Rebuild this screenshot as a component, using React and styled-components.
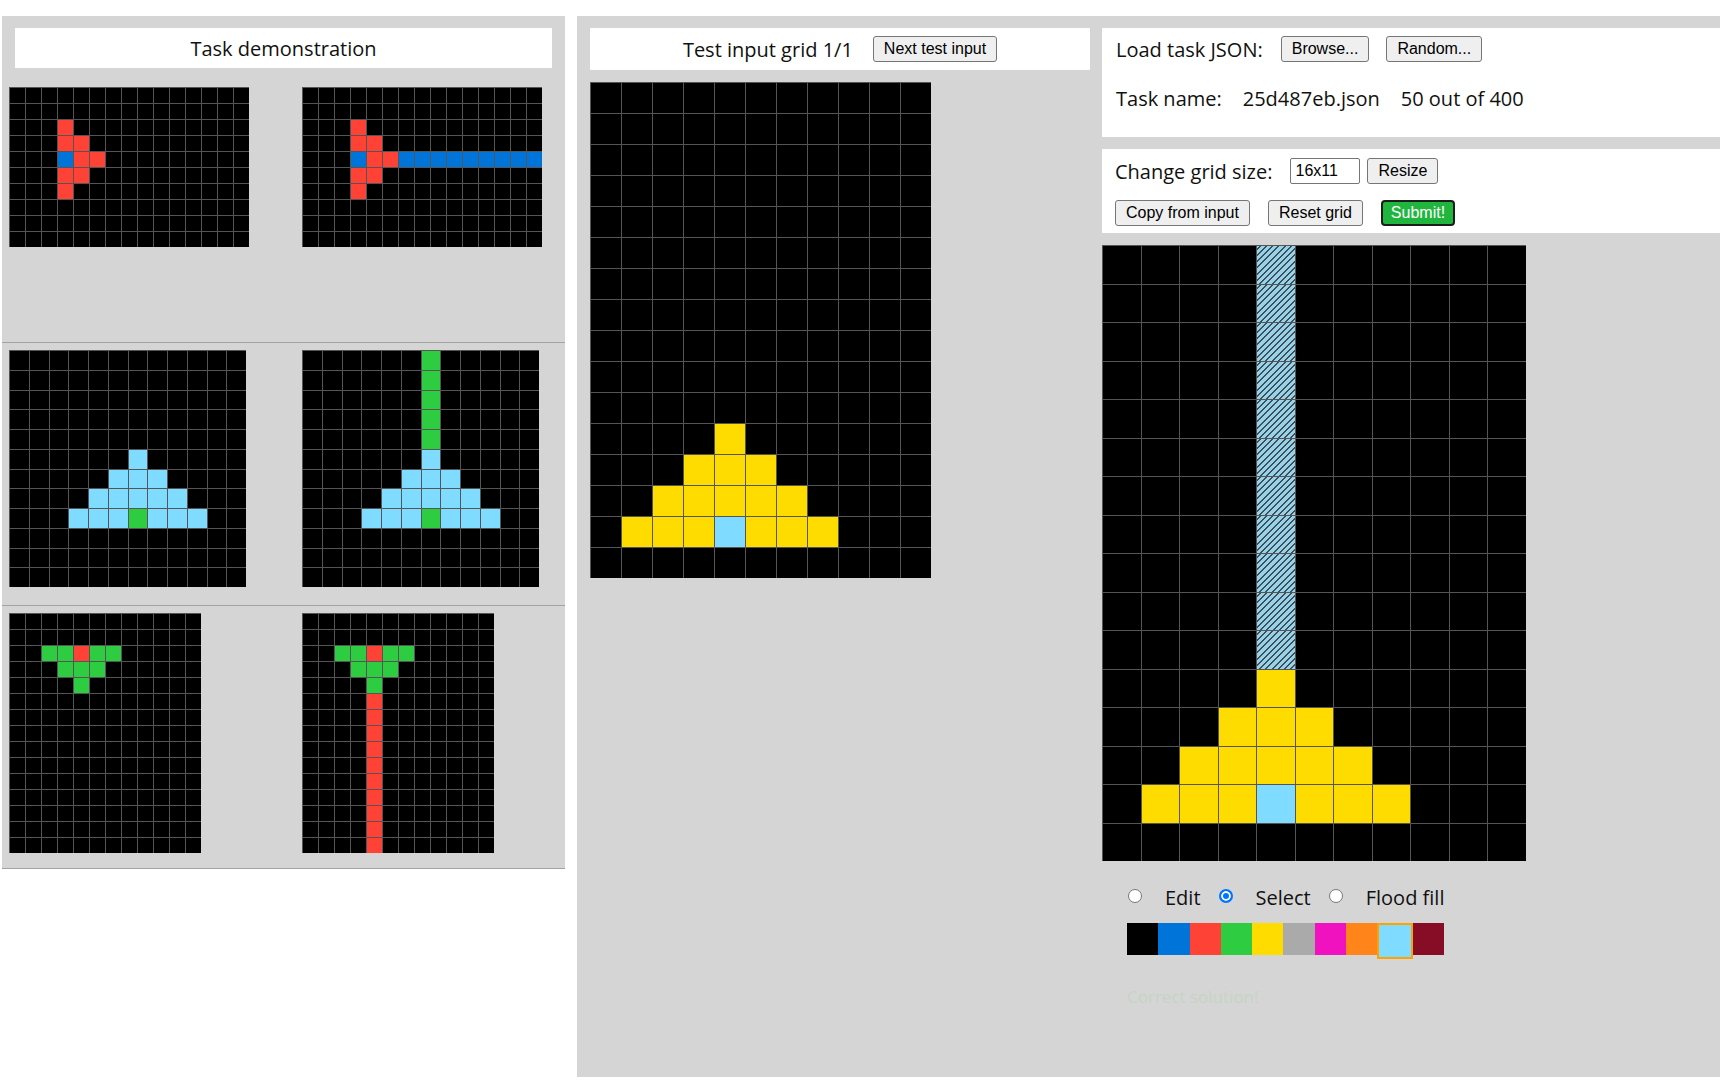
import React from 'react';
import styled, { createGlobalStyle, css } from 'styled-components';

const PALETTE = ['#000000', '#0074D9', '#FF4136', '#2ECC40', '#FFDC00', '#AAAAAA', '#F012BE', '#FF851B', '#7FDBFF', '#870C25'];

function makeGrid(rows, cols, marks) {
  const g = Array.from({ length: rows }, () => Array(cols).fill(0));
  marks.forEach(([r, c, v]) => { g[r][c] = v; });
  return g;
}
const range = (a, b) => Array.from({ length: b - a + 1 }, (_, i) => a + i);

const arrowShape = [[2, 3, 2], [3, 3, 2], [3, 4, 2], [4, 3, 1], [4, 4, 2], [4, 5, 2], [5, 3, 2], [5, 4, 2], [6, 3, 2]];
const triShape = [
  [5, 6, 8],
  ...range(5, 7).map((c) => [6, c, 8]),
  ...range(4, 8).map((c) => [7, c, 8]),
  ...range(3, 9).map((c) => [8, c, c === 6 ? 3 : 8]),
];
const tShape = [[2, 2, 3], [2, 3, 3], [2, 4, 2], [2, 5, 3], [2, 6, 3], [3, 3, 3], [3, 4, 3], [3, 5, 3], [4, 4, 3]];
const yellowTri = [
  [11, 4, 4],
  ...range(3, 5).map((c) => [12, c, 4]),
  ...range(2, 6).map((c) => [13, c, 4]),
  ...range(1, 7).map((c) => [14, c, c === 4 ? 8 : 4]),
];

const pairs = [
  { cell: 16, grids: [makeGrid(10, 15, arrowShape), makeGrid(10, 15, [...arrowShape, ...range(6, 14).map((c) => [4, c, 1])])] },
  { cell: 19.75, grids: [makeGrid(12, 12, triShape), makeGrid(12, 12, [...triShape, ...range(0, 4).map((r) => [r, 6, 3])])] },
  { cell: 16, grids: [makeGrid(15, 12, tShape), makeGrid(15, 12, [...tShape, ...range(5, 14).map((r) => [r, 4, 2])])] },
];
const testInput = makeGrid(16, 11, yellowTri);
const testOutput = makeGrid(16, 11, yellowTri);
const selectedCells = new Set(range(0, 10).map((r) => `${r}-4`));

const GlobalStyle = createGlobalStyle`
  html, body { margin: 0; padding: 0; background: #fff; overflow: hidden; }
  body { font-family: "Open Sans", "DejaVu Sans", sans-serif; color: #111; }
  * { box-sizing: border-box; }
`;

const Workspace = styled.div`
  display: flex;
  align-items: flex-start;
  gap: 12px;
  width: 1720px;
  height: 1088px;
  padding: 16px 0 0 2px;
  overflow: hidden;
`;

const DemoPanel = styled.section`
  flex: 0 0 563px;
  background: #d5d5d5;
`;

const PanelTitle = styled.div`
  background: #fff;
  height: ${(p) => p.$h || 40}px;
  margin: 12px 13px 12px;
  display: flex;
  align-items: center;
  justify-content: center;
  gap: 20px;
  font-size: 20px;
`;

const PairRow = styled.div`
  display: flex;
  align-items: flex-start;
  gap: 53px;
  padding: 7px 0 15px 7px;
  height: 263px;
  border-bottom: 1px solid #a3a3a3;
`;

const GridSlot = styled.div`
  width: 240px;
  height: 240px;
`;

const GridBox = styled.div`
  display: grid;
  grid-template-columns: repeat(${(p) => p.$cols}, ${(p) => p.$cell}px);
  grid-auto-rows: ${(p) => p.$cell}px;
  width: max-content;
  background: #000;
`;

const Cell = styled.div`
  background: ${(p) => p.$color};
  box-shadow: inset 1px 1px 0 #555;
  ${(p) =>
    p.$selected &&
    css`
      background: repeating-linear-gradient(135deg, #98d2e8 0 3px, #3d5059 3px 4.4px);
    `}
`;

const EvalView = styled.section`
  flex: 1 0 auto;
  height: 1061px;
  background: #d5d5d5;
  display: flex;
  align-items: flex-start;
  gap: 12px;
  padding-left: 13px;
  overflow: hidden;
`;

const InputColumn = styled.div`
  flex: 0 0 500px;
  display: flex;
  flex-direction: column;
  & > ${PanelTitle} {
    margin: 12px 0 12px;
  }
`;

const OutputColumn = styled.div`
  flex: 0 0 720px;
  display: flex;
  flex-direction: column;
  padding-top: 12px;
`;

const Box = styled.div`
  background: #fff;
  padding: ${(p) => p.$pad};
  margin-bottom: 12px;
  height: ${(p) => p.$h}px;
  display: flex;
  flex-direction: column;
  gap: ${(p) => p.$gap}px;
`;

const Row = styled.div`
  display: flex;
  align-items: center;
  height: 26px;
  gap: ${(p) => p.$gap || 18}px;
  font-size: 20px;
`;

const Btn = styled.button`
  font-family: Arial, "Liberation Sans", sans-serif;
  font-size: 16px;
  height: 26px;
  padding: 0 10px;
  background: #efefef;
  color: #000;
  border: 1px solid #767676;
  border-radius: 3px;
  line-height: 1;
  ${(p) =>
    p.$submit &&
    css`
      background: #20b63e;
      color: #fff;
      border: 2px solid #1c1c1c;
      border-radius: 4px;
      padding: 0 8px;
    `}
`;

const SizeInput = styled.input`
  width: 70px;
  height: 26px;
  font-family: Arial, "Liberation Sans", sans-serif;
  font-size: 16px;
  padding: 0 4px;
  border: 1px solid #767676;
  border-radius: 2px;
  color: #000;
  margin-right: -11px;
`;

const Tools = styled.div`
  padding: 23px 0 0 25px;
  display: flex;
  flex-direction: column;
`;

const ModeRow = styled.div`
  display: flex;
  align-items: center;
  height: 26px;
  font-size: 20px;
`;

const Radio = styled.input`
  appearance: none;
  -webkit-appearance: none;
  width: 14px;
  height: 14px;
  margin: -2px 23px 0 1px;
  border-radius: 50%;
  border: 1px solid #767676;
  background: #fff;
  flex-shrink: 0;
  &:checked {
    border: 2px solid #0075ff;
    background: #0075ff;
    box-shadow: inset 0 0 0 2px #fff;
  }
`;

const ModeLabel = styled.span`
  margin-right: 17px;
`;

const PaletteRow = styled.div`
  display: flex;
  align-items: flex-start;
  margin-top: 13px;
`;

const Swatch = styled.div`
  box-sizing: content-box;
  width: 31.3px;
  height: 32px;
  background: ${(p) => p.$color};
  border: ${(p) => (p.$active ? '2px solid #ffa200' : 'none')};
`;

const Status = styled.div`
  margin-top: 24px;
  font-size: 17px;
  color: #c6d4c4;
  line-height: 27px;
`;

function ArcGrid({ grid, cell, selected }) {
  const cols = grid[0].length;
  return (
    <GridBox $cols={cols} $cell={cell}>
      {grid.map((row, r) =>
        row.map((v, c) => (
          <Cell key={`${r}-${c}`} $color={PALETTE[v]} $selected={selected && selected.has(`${r}-${c}`)} />
        ))
      )}
    </GridBox>
  );
}

export default function App() {
  return (
    <>
      <GlobalStyle />
      <Workspace>
        <DemoPanel>
          <PanelTitle>Task demonstration</PanelTitle>
          {pairs.map(({ cell, grids: [a, b] }, i) => (
            <PairRow key={i}>
              <GridSlot>
                <ArcGrid grid={a} cell={cell} />
              </GridSlot>
              <GridSlot>
                <ArcGrid grid={b} cell={cell} />
              </GridSlot>
            </PairRow>
          ))}
        </DemoPanel>

        <EvalView>
          <InputColumn>
            <PanelTitle $h={42}>
              <span>Test input grid 1/1</span>
              <Btn>Next test input</Btn>
            </PanelTitle>
            <ArcGrid grid={testInput} cell={31} />
          </InputColumn>

          <OutputColumn>
            <Box $h={109} $pad="8px 14px 0" $gap={23}>
              <Row>
                <span>Load task JSON:</span>
                <Btn>Browse...</Btn>
                <Btn style={{ marginLeft: -1 }}>Random...</Btn>
              </Row>
              <Row $gap={21}>
                <span>Task name:</span>
                <span>25d487eb.json</span>
                <span>50 out of 400</span>
              </Row>
            </Box>
            <Box $h={84} $pad="9px 13px 0" $gap={16}>
              <Row>
                <span>Change grid size:</span>
                <SizeInput defaultValue="16x11" />
                <Btn>Resize</Btn>
              </Row>
              <Row $gap={18}>
                <Btn>Copy from input</Btn>
                <Btn>Reset grid</Btn>
                <Btn $submit>Submit!</Btn>
              </Row>
            </Box>
            <ArcGrid grid={testOutput} cell={38.5} selected={selectedCells} />
            <Tools>
              <ModeRow>
                <Radio type="radio" name="mode" />
                <ModeLabel>Edit</ModeLabel>
                <Radio type="radio" name="mode" defaultChecked />
                <ModeLabel>Select</ModeLabel>
                <Radio type="radio" name="mode" />
                <ModeLabel>Flood fill</ModeLabel>
              </ModeRow>
              <PaletteRow>
                {PALETTE.map((c, i) => (
                  <Swatch key={c} $color={c} $active={i === 8} />
                ))}
              </PaletteRow>
              <Status>Correct solution!</Status>
            </Tools>
          </OutputColumn>
        </EvalView>
      </Workspace>
    </>
  );
}
